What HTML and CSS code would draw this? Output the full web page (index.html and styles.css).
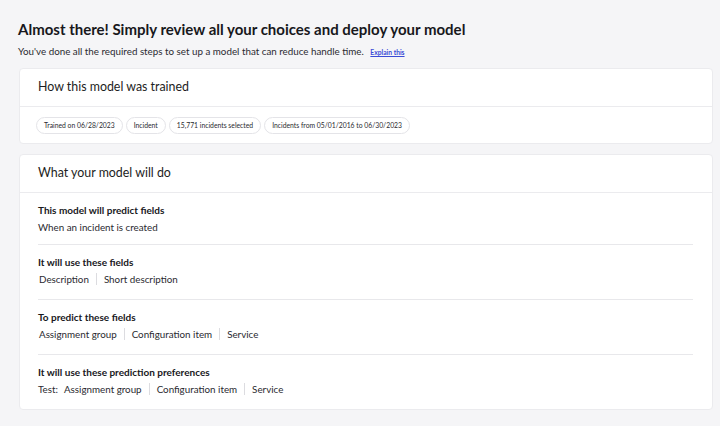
FILE: index.html
```html
<!DOCTYPE html>
<html>
<head>
<meta charset="utf-8">
<link rel="stylesheet" href="styles.css">
</head>
<body>
<main class="page">
  <h1 class="title">Almost there! Simply review all your choices and deploy your model</h1>
  <p class="subtitle">You've done all the required steps to set up a model that can reduce handle time. <a class="link" href="#">Explain this</a></p>

  <section class="card">
    <div class="card-head">How this model was trained</div>
    <div class="chips">
      <span class="chip">Trained on 06/28/2023</span>
      <span class="chip">Incident</span>
      <span class="chip">15,771 incidents selected</span>
      <span class="chip">Incidents from 05/01/2016 to 06/30/2023</span>
    </div>
  </section>

  <section class="card">
    <div class="card-head">What your model will do</div>
    <div class="card-body">
      <div class="group">
        <div class="label">This model will predict fields</div>
        <div class="value plain">When an incident is created</div>
      </div>
      <div class="group">
        <div class="label">It will use these fields</div>
        <div class="value"><span class="item">Description</span><span class="item">Short description</span></div>
      </div>
      <div class="group">
        <div class="label">To predict these fields</div>
        <div class="value"><span class="item">Assignment group</span><span class="item">Configuration item</span><span class="item">Service</span></div>
      </div>
      <div class="group">
        <div class="label">It will use these prediction preferences</div>
        <div class="value"><span class="prefix">Test:</span><span class="item">Assignment group</span><span class="item">Configuration item</span><span class="item">Service</span></div>
      </div>
    </div>
  </section>
</main>
</body>
</html>
```

FILE: styles.css
```css
html, body {
  margin: 0;
  padding: 0;
  background: #f5f5f7;
  font-family: Lato, "Noto Sans", sans-serif;
  color: #1d1d22;
}
.page {
  padding: 19px 7px 0 18px;
  display: flex;
  flex-direction: column;
}
.title {
  margin: 0;
  font-size: 15px;
  font-weight: 700;
  line-height: 20px;
  color: #18181c;
}
.subtitle {
  margin: 5px 0 0 0;
  font-size: 9.8px;
  line-height: 14px;
  color: #2b2b31;
}
.link {
  margin-left: 4px;
  font-size: 6.7px;
  color: #3a4bd6;
  text-decoration: underline;
  font-weight: 700;
}
.card {
  background: #ffffff;
  border: 1px solid #ebebee;
  border-radius: 4px;
  margin-top: 9px;
  margin-left: 1px;
}
.card + .card {
  margin-top: 10px;
}
.card-head {
  font-size: 12.4px;
  line-height: 18px;
  padding: 9px 18px 10px 18px;
  border-bottom: 1px solid #ebebee;
  color: #1d1d22;
}
.chips {
  display: flex;
  gap: 3px;
  padding: 10px 16px 9px 16px;
}
.chip {
  font-size: 6.8px;
  line-height: 15px;
  padding: 0 7px;
  border: 1px solid #e4e4e8;
  border-radius: 9px;
  color: #2a2a30;
}
.card-body {
  padding: 0 19px 0 18px;
}
.group {
  padding: 9px 0 11px 0;
  border-bottom: 1px solid #e8e8eb;
}
.group:first-child {
  padding-bottom: 9px;
}
.group:last-child {
  border-bottom: none;
  padding-bottom: 11px;
}
.label {
  font-size: 10px;
  font-weight: 700;
  line-height: 16px;
  color: #18181c;
}
.value {
  display: flex;
  align-items: center;
  height: 18px;
  font-size: 9.8px;
  color: #2a2a30;
}
.value.plain {
  display: block;
  height: auto;
  margin-top: 1px;
  line-height: 16px;
}
.item {
  padding: 0 7px;
  border-left: 1px solid #dcdce0;
  line-height: 12px;
}
.item:first-child {
  border-left: none;
  padding-left: 1px;
}
.prefix {
  padding-right: 6px;
}
.prefix + .item {
  border-left: none;
  padding-left: 0;
}
```
